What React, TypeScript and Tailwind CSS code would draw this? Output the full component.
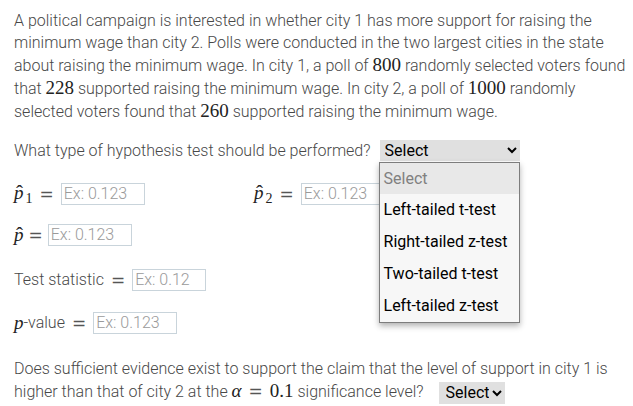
import React from 'react';

const serif = "font-['Liberation_Serif','DejaVu_Serif',serif]";

function Num({ children }: { children: React.ReactNode }) {
  return <span className={`${serif} text-[19px] text-[#222] font-normal`}>{children}</span>;
}

function PHat({ sub }: { sub?: string }) {
  return (
    <span className={`${serif} text-[19px] text-[#222] font-normal inline-flex items-baseline`}>
      <span className="relative inline-block italic">
        p
        <span className="absolute left-[2px] top-[1px] leading-none not-italic text-[21px]">ˆ</span>
      </span>
      {sub && <span className="text-[14px] relative top-[4px] ml-[2px]">{sub}</span>}
    </span>
  );
}

function Eq({ tight }: { tight?: boolean }) {
  return (
    <span
      className={`font-['DejaVu_Sans',sans-serif] font-normal text-[17px] text-[#555] ${tight ? 'mx-[5px]' : 'mx-[7px]'}`}
    >
      =
    </span>
  );
}

function Field({ w, ph }: { w: string; ph: string }) {
  return (
    <input
      placeholder={ph}
      className={`${w} h-[22px] border border-[#c9d4db] px-[2px] text-[16px] font-light text-[#333] placeholder:text-[#9a9a9a] outline-none bg-white`}
    />
  );
}

export default function App() {
  const options = ['Left-tailed t-test', 'Right-tailed z-test', 'Two-tailed t-test', 'Left-tailed z-test'];

  return (
    <div className="w-[633px] h-[406px] overflow-hidden bg-white pl-[14px] pr-[2px] pt-[10px] font-['Roboto',sans-serif] font-light text-[16px] leading-[22px] text-[#484848]">
      <p>
        A political campaign is interested in whether city 1 has more support for raising the minimum wage than
        city 2. Polls were conducted in the two largest cities in the state about raising the minimum wage. In city 1,
        a poll of <Num>800</Num> randomly selected voters found that <Num>228</Num> supported raising the minimum
        wage. In city 2, a poll of <Num>1000</Num> randomly selected voters found that <Num>260</Num> supported
        raising the minimum wage.
      </p>

      <div className="mt-[17px] flex items-center h-[21px]">
        <span>What type of hypothesis test should be performed?</span>
        <div className="relative ml-[9px]">
          <select className="w-[140px] h-[21px] bg-[#e0e0e0] text-black font-normal text-[16px] font-['Roboto',sans-serif] pl-[1px] outline-none">
            <option>Select</option>
            {options.map((o) => (
              <option key={o}>{o}</option>
            ))}
          </select>
          <div className="absolute left-[-1px] top-[22px] w-[141px] z-10 border border-[#7d7d7d] bg-[#f7f7f7] shadow-[0_3px_6px_rgba(0,0,0,0.3)] font-normal text-black leading-[32px]">
            <div className="h-[31px] bg-[#e8e8e8] text-[#808080] pl-[4px] leading-[31px]">Select</div>
            {options.map((o) => (
              <div key={o} className="h-[32px] pl-[4px]">
                {o}
              </div>
            ))}
          </div>
        </div>
      </div>

      <div className="mt-[22px] flex items-center h-[22px]">
        <div className="flex items-center w-[240px]">
          <PHat sub="1" />
          <Eq />
          <Field w="w-[84px]" ph="Ex: 0.123" />
        </div>
        <div className="flex items-center">
          <PHat sub="2" />
          <Eq />
          <Field w="w-[84px]" ph="Ex: 0.123" />
        </div>
      </div>

      <div className="mt-[19px] flex items-center h-[22px]">
        <PHat />
        <Eq tight />
        <Field w="w-[84px]" ph="Ex: 0.123" />
      </div>

      <div className="mt-[23px] flex items-center h-[22px]">
        <span>Test statistic</span>
        <Eq />
        <Field w="w-[74px]" ph="Ex: 0.12" />
      </div>

      <div className="mt-[21px] flex items-center h-[22px]">
        <span className={`${serif} italic text-[19px] text-[#222]`}>p</span>
        <span>-value</span>
        <Eq />
        <Field w="w-[84px]" ph="Ex: 0.123" />
      </div>

      <p className="mt-[24px]">
        Does sufficient evidence exist to support the claim that the level of support in city 1 is higher than that
        of city 2 at the <span className={`${serif} italic text-[19px] text-[#222]`}>α</span>
        <Eq />
        <Num>0.1</Num> significance level?
        <select className="ml-[15px] w-[66px] h-[22px] pl-[3px] pr-0 bg-[#e0e0e0] text-black font-normal text-[16px] font-['Roboto',sans-serif] outline-none align-middle">
          <option>Select</option>
          <option>Yes</option>
          <option>No</option>
        </select>
      </p>
    </div>
  );
}
